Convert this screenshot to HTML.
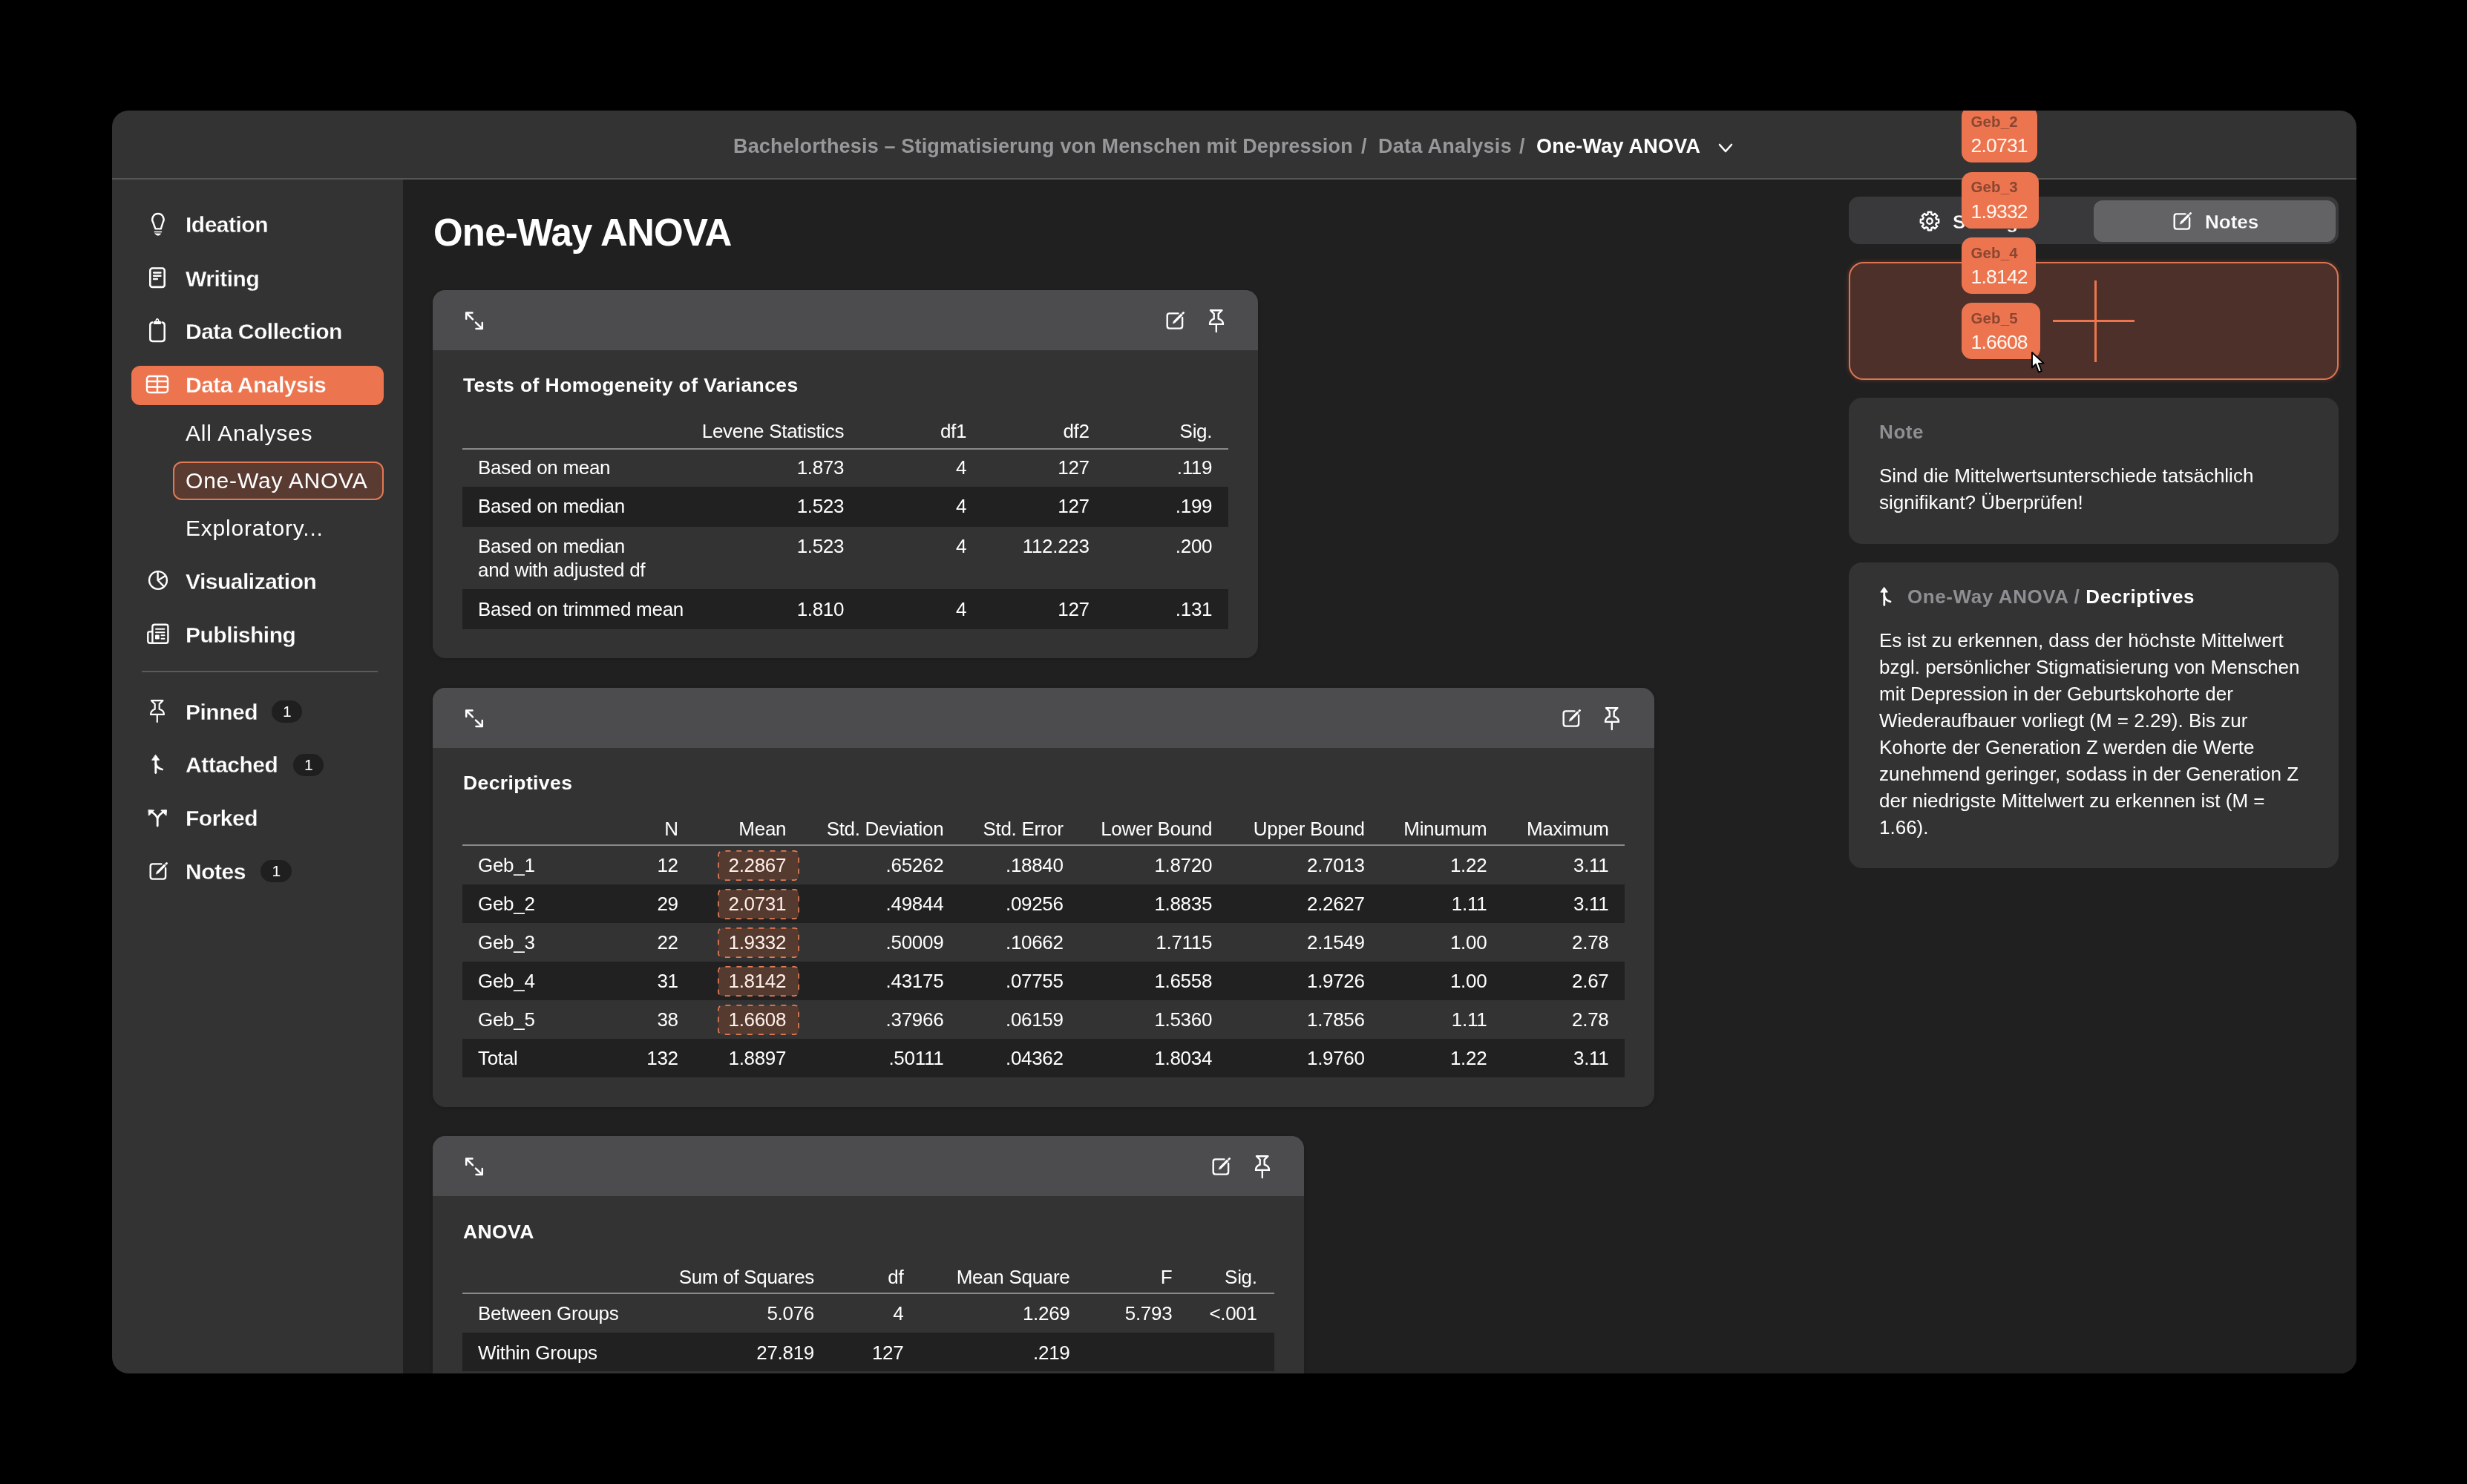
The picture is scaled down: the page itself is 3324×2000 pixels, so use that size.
<!DOCTYPE html><html><head><meta charset="utf-8"><title>One-Way ANOVA</title><style>
html,body{margin:0;padding:0;background:#000;width:3324px;height:2000px;overflow:hidden;}
body{position:relative;font-family:"Liberation Sans", sans-serif;}
.t{position:absolute;white-space:nowrap;}
</style></head><body><div id="root" style="position:absolute;left:0;top:0;width:3324px;height:2000px;will-change:transform;">
<div style="position:absolute;left:151px;top:149px;width:3024px;height:1702px;border-radius:22px;overflow:hidden;background:#333333;">
<div style="position:absolute;left:392px;top:93px;width:2632px;height:1609px;background:#202020;"></div>
<div style="position:absolute;left:0;top:91px;width:3024px;height:2px;background:#555;"></div>
</div>
<div class="t" style="left:988px;top:179.64px;font-size:27px;line-height:34px;font-weight:700;letter-spacing:0.16px;color:#98989b;">Bachelorthesis – Stigmatisierung von Menschen mit Depression</div>
<div class="t" style="left:1834px;top:179.64px;font-size:27px;line-height:34px;font-weight:700;color:#98989b;">/</div>
<div class="t" style="left:1857px;top:179.64px;font-size:27px;line-height:34px;font-weight:700;letter-spacing:0.3px;color:#98989b;">Data Analysis</div>
<div class="t" style="left:2047px;top:179.64px;font-size:27px;line-height:34px;font-weight:700;color:#98989b;">/</div>
<div class="t" style="left:2070px;top:179.64px;font-size:27px;line-height:34px;font-weight:700;letter-spacing:0.25px;color:#fff;">One-Way ANOVA</div>
<svg style="position:absolute;left:2313px;top:189px;" width="24" height="20" viewBox="0 0 24 20" fill="none" stroke="#fff" stroke-width="2.6" stroke-linecap="round" stroke-linejoin="round"><path d="M4 6 L12 15 L20 6"/></svg>
<div class="t" style="left:250px;top:284.11px;font-size:30px;line-height:38px;font-weight:700;-webkit-text-stroke:0.3px #333333;letter-spacing:-0.5px;color:#fff;">Ideation</div>
<div class="t" style="left:250px;top:356.61px;font-size:30px;line-height:38px;font-weight:700;-webkit-text-stroke:0.3px #333333;letter-spacing:-0.5px;color:#fff;">Writing</div>
<div class="t" style="left:250px;top:427.61px;font-size:30px;line-height:38px;font-weight:700;-webkit-text-stroke:0.3px #333333;letter-spacing:-0.5px;color:#fff;">Data Collection</div>
<div style="position:absolute;left:177px;top:493px;width:340px;height:53px;background:#ec7550;border-radius:12px;"></div>
<div class="t" style="left:250px;top:499.61px;font-size:30px;line-height:38px;font-weight:700;-webkit-text-stroke:0.3px #ec7550;letter-spacing:-0.5px;color:#fff;">Data Analysis</div>
<div class="t" style="left:250px;top:564.61px;font-size:30px;line-height:38px;letter-spacing:0.8px;color:#fff;">All Analyses</div>
<div style="position:absolute;left:233px;top:621.5px;width:284px;height:52.0px;background:#593b32;border:2px solid #e27954;border-radius:12px;box-sizing:border-box;"></div>
<div class="t" style="left:250px;top:628.61px;font-size:30px;line-height:38px;letter-spacing:0.8px;color:#fff;">One-Way ANOVA</div>
<div class="t" style="left:250px;top:692.61px;font-size:30px;line-height:38px;letter-spacing:0.8px;color:#fff;">Exploratory...</div>
<div class="t" style="left:250px;top:764.61px;font-size:30px;line-height:38px;font-weight:700;-webkit-text-stroke:0.3px #333333;letter-spacing:-0.5px;color:#fff;">Visualization</div>
<div class="t" style="left:250px;top:836.61px;font-size:30px;line-height:38px;font-weight:700;-webkit-text-stroke:0.3px #333333;letter-spacing:-0.5px;color:#fff;">Publishing</div>
<div style="position:absolute;left:191px;top:904px;width:318px;height:2px;background:#5a5a5a;"></div>
<div class="t" style="left:250px;top:940.61px;font-size:30px;line-height:38px;font-weight:700;-webkit-text-stroke:0.3px #333333;letter-spacing:-0.5px;color:#fff;">Pinned</div>
<div class="t" style="left:250px;top:1012.11px;font-size:30px;line-height:38px;font-weight:700;-webkit-text-stroke:0.3px #333333;letter-spacing:-0.5px;color:#fff;">Attached</div>
<div class="t" style="left:250px;top:1083.61px;font-size:30px;line-height:38px;font-weight:700;-webkit-text-stroke:0.3px #333333;letter-spacing:-0.5px;color:#fff;">Forked</div>
<div class="t" style="left:250px;top:1155.61px;font-size:30px;line-height:38px;font-weight:700;-webkit-text-stroke:0.3px #333333;letter-spacing:-0.5px;color:#fff;">Notes</div>
<div style="position:absolute;left:366px;top:944px;width:41px;height:30px;background:#1f1f1f;border-radius:15px;"></div>
<div class="t" style="left:381.0px;top:946.22px;font-size:21px;line-height:26px;color:#fff;">1</div>
<div style="position:absolute;left:395px;top:1015.5px;width:41px;height:30.0px;background:#1f1f1f;border-radius:15px;"></div>
<div class="t" style="left:410.0px;top:1017.72px;font-size:21px;line-height:26px;color:#fff;">1</div>
<div style="position:absolute;left:351px;top:1159px;width:42px;height:30px;background:#1f1f1f;border-radius:15px;"></div>
<div class="t" style="left:366.5px;top:1161.22px;font-size:21px;line-height:26px;color:#fff;">1</div>
<svg style="position:absolute;left:200px;top:284px;" width="26" height="36" viewBox="0 0 26 36" fill="none" stroke="#fff" stroke-width="2.4" stroke-linecap="round" stroke-linejoin="round"><path d="M9.4 24.4 L6.2 15.5 A7.7 7.7 0 1 1 19.6 15.5 L16.8 24.4 Z"/><path d="M8.4 28.5 H17.4" stroke-width="1.7"/><path d="M9.2 30.9 H16.6 Q15.5 33.2 12.9 33.2 Q10.3 33.2 9.2 30.9 Z" fill="#fff" stroke-width="0.8"/></svg>
<svg style="position:absolute;left:199px;top:358px;" width="26" height="32" viewBox="0 0 26 32" fill="none" stroke="#fff" stroke-width="2.6" stroke-linecap="round" stroke-linejoin="round"><rect x="3.3" y="3.5" width="19.4" height="25.4" rx="3"/><path d="M8.2 9.5 H17.4 M8.2 13.8 H17.4 M8.2 18 H12.8"/></svg>
<svg style="position:absolute;left:199px;top:427px;" width="26" height="36" viewBox="0 0 26 36" fill="none" stroke="#fff" stroke-width="2.5" stroke-linecap="round" stroke-linejoin="round"><path d="M6.4 7.5 Q3.3 7.7 3.3 11.5 V29.6 Q3.3 33 6.8 33 H19.2 Q22.7 33 22.7 29.6 V11.5 Q22.7 7.7 19.6 7.5"/><path d="M8.1 9.9 V6.8 Q8.1 5.8 9.1 5.8 H10.3 Q10.6 2 12.9 2 Q15.2 2 15.5 5.8 H16.9 Q17.9 5.8 17.9 6.8 V9.9 Z" fill="#fff" stroke="none"/><circle cx="12.9" cy="4.9" r="1.05" fill="#333" stroke="none"/></svg>
<svg style="position:absolute;left:195px;top:504px;" width="34" height="28" viewBox="0 0 34 28" fill="none" stroke="#fff" stroke-width="2.4" stroke-linecap="round" stroke-linejoin="round"><rect x="3" y="3" width="28" height="22" rx="3.8"/><path d="M3 10 H31 M3 17.5 H31 M17 3 V25"/></svg>
<svg style="position:absolute;left:196.5px;top:766.3px;" width="32" height="32" viewBox="0 0 32 32" fill="none" stroke="#fff" stroke-width="2.4" stroke-linecap="round" stroke-linejoin="round"><circle cx="16" cy="16" r="11.9"/><path d="M15.6 4.1 V16 L23.6 24.2 M16 16 L25.9 10"/></svg>
<svg style="position:absolute;left:196px;top:838px;" width="34" height="32" viewBox="0 0 34 32" fill="none" stroke="#fff" stroke-width="2.4" stroke-linecap="round" stroke-linejoin="round"><path d="M9.4 28.8 H27.4 Q30.4 28.8 30.4 25.8 V6.7 Q30.4 3.7 27.4 3.7 H12.4 Q9.4 3.7 9.4 6.7 V28.8 Z M9.4 28.8 H6.3 Q3.3 28.8 3.3 25.8 V15.4 Q3.3 13.4 5.3 13.4 H9.4"/><path d="M14 9.8 H25.5 M14 14.2 H25.5 M21.5 18.3 H25.5 M21.5 22.7 H25.5" stroke-width="1.9"/><rect x="13" y="17.5" width="5.7" height="6" rx="1.2" fill="#fff" stroke="none"/></svg>
<svg style="position:absolute;left:201px;top:942px;" width="24" height="34" viewBox="0 0 24 34" fill="none" stroke="#fff" stroke-width="2.2" stroke-linecap="round" stroke-linejoin="round"><path d="M3 2.2 H18.4 L13.7 6.9 V13.7 C17.5 14.8 20 17.5 20 20.9 H2 C2 17.5 4.5 14.8 7.7 13.7 V6.9 Z"/><path d="M10.8 21 V31"/></svg>
<svg style="position:absolute;left:201px;top:1014px;" width="24" height="32" viewBox="0 0 24 32" fill="none" stroke="#fff" stroke-width="2.8" stroke-linecap="round" stroke-linejoin="round"><path d="M8.8 27.6 V9.5"/><path d="M8.8 3.6 L13.6 10.3 H4 Z" fill="#fff" stroke-width="1"/><path d="M8.8 15 Q9.8 21 17.6 23"/></svg>
<svg style="position:absolute;left:197px;top:1088px;" width="30" height="28" viewBox="0 0 30 28" fill="none" stroke="#fff" stroke-width="2.8" stroke-linecap="round" stroke-linejoin="round"><path d="M15.2 25 V16 Q15.2 12 8.5 7 M15.2 16 Q15.2 12 21.9 7"/><path d="M3.3 3.7 L10.6 4 L3.7 10.9 Z M27.1 3.7 L19.8 4 L26.7 10.9 Z" fill="#fff" stroke-width="1"/></svg>
<svg style="position:absolute;left:198px;top:1158px;" width="32" height="32" viewBox="0 0 32 32" fill="none" stroke="#fff" stroke-width="2.4" stroke-linecap="round" stroke-linejoin="round"><path d="M19.5 6.4 H7.7 Q4.7 6.4 4.7 9.4 V23.6 Q4.7 26.6 7.7 26.6 H22.1 Q25.1 26.6 25.1 23.6 V12"/><path d="M12.3 19.8 L13.4 16.7 L23.3 6.8 L25.3 8.8 L15.4 18.7 Z" fill="#fff" stroke-width="0.6"/><path d="M25.7 6.3 L26.6 5.4" stroke-width="2.8"/></svg>
<div class="t" style="left:584px;top:282.33px;font-size:51px;line-height:64px;font-weight:700;letter-spacing:-0.8px;color:#fff;">One-Way ANOVA</div>
<div style="position:absolute;left:583px;top:391px;width:1112px;height:496px;background:#333333;border-radius:17px;overflow:hidden;box-shadow:0 1px 5px rgba(0,0,0,0.18);"><div style="position:absolute;left:0;top:0;right:0;height:81px;background:#4c4c4e;"></div></div>
<svg style="position:absolute;left:623px;top:416px;" width="32" height="32" viewBox="0 0 32 32" fill="none" stroke="#fff" stroke-width="2.5" stroke-linecap="round" stroke-linejoin="round"><path d="M5.2 13.8 V5.5 H13.5 M5.2 5.5 L14 14.3"/><path d="M26.8 19 V27.1 H18.5 M26.8 27.1 L18 18.7"/></svg>
<svg style="position:absolute;left:1568px;top:416px;" width="32" height="32" viewBox="0 0 32 32" fill="none" stroke="#fff" stroke-width="2.4" stroke-linecap="round" stroke-linejoin="round"><path d="M19.5 6.4 H7.7 Q4.7 6.4 4.7 9.4 V23.6 Q4.7 26.6 7.7 26.6 H22.1 Q25.1 26.6 25.1 23.6 V12"/><path d="M12.3 19.8 L13.4 16.7 L23.3 6.8 L25.3 8.8 L15.4 18.7 Z" fill="#fff" stroke-width="0.6"/><path d="M25.7 6.3 L26.6 5.4" stroke-width="2.8"/></svg>
<svg style="position:absolute;left:1628px;top:416px;" width="24" height="34" viewBox="0 0 24 34" fill="none" stroke="#fff" stroke-width="2.4" stroke-linecap="round" stroke-linejoin="round"><path d="M3 2.2 H18.4 L13.7 6.9 V13.7 C17.5 14.8 20 17.5 20 20.9 H2 C2 17.5 4.5 14.8 7.7 13.7 V6.9 Z"/><path d="M10.8 21 V31"/></svg>
<div class="t" style="left:624px;top:503.32px;font-size:26.5px;line-height:33px;font-weight:700;letter-spacing:0.4px;color:#fff;">Tests of Homogeneity of Variances</div>
<div class="t" style="right:2186.80px;text-align:right;top:565.49px;font-size:26px;line-height:32px;letter-spacing:-0.3px;color:#fff;">Levene Statistics</div>
<div class="t" style="right:2021.80px;text-align:right;top:565.49px;font-size:26px;line-height:32px;letter-spacing:-0.3px;color:#fff;">df1</div>
<div class="t" style="right:1856.30px;text-align:right;top:565.49px;font-size:26px;line-height:32px;letter-spacing:-0.3px;color:#fff;">df2</div>
<div class="t" style="right:1690.80px;text-align:right;top:565.49px;font-size:26px;line-height:32px;letter-spacing:-0.3px;color:#fff;">Sig.</div>
<div style="position:absolute;left:623px;top:604px;width:1032px;height:2px;background:#8a8a8a;"></div>
<div style="position:absolute;left:623px;top:656px;width:1032px;height:53.5px;background:#212121;"></div>
<div style="position:absolute;left:623px;top:793.5px;width:1032px;height:54.0px;background:#212121;"></div>
<div class="t" style="left:644px;top:614.49px;font-size:26px;line-height:32px;letter-spacing:-0.3px;color:#fff;">Based on mean</div>
<div class="t" style="right:2186.80px;text-align:right;top:614.49px;font-size:26px;line-height:32px;letter-spacing:-0.3px;color:#fff;">1.873</div>
<div class="t" style="right:2021.80px;text-align:right;top:614.49px;font-size:26px;line-height:32px;letter-spacing:-0.3px;color:#fff;">4</div>
<div class="t" style="right:1856.30px;text-align:right;top:614.49px;font-size:26px;line-height:32px;letter-spacing:-0.3px;color:#fff;">127</div>
<div class="t" style="right:1690.80px;text-align:right;top:614.49px;font-size:26px;line-height:32px;letter-spacing:-0.3px;color:#fff;">.119</div>
<div class="t" style="left:644px;top:665.99px;font-size:26px;line-height:32px;letter-spacing:-0.3px;color:#fff;">Based on median</div>
<div class="t" style="right:2186.80px;text-align:right;top:665.99px;font-size:26px;line-height:32px;letter-spacing:-0.3px;color:#fff;">1.523</div>
<div class="t" style="right:2021.80px;text-align:right;top:665.99px;font-size:26px;line-height:32px;letter-spacing:-0.3px;color:#fff;">4</div>
<div class="t" style="right:1856.30px;text-align:right;top:665.99px;font-size:26px;line-height:32px;letter-spacing:-0.3px;color:#fff;">127</div>
<div class="t" style="right:1690.80px;text-align:right;top:665.99px;font-size:26px;line-height:32px;letter-spacing:-0.3px;color:#fff;">.199</div>
<div class="t" style="left:644px;top:720.49px;font-size:26px;line-height:32px;letter-spacing:-0.3px;color:#fff;">Based on median</div>
<div class="t" style="right:2186.80px;text-align:right;top:720.49px;font-size:26px;line-height:32px;letter-spacing:-0.3px;color:#fff;">1.523</div>
<div class="t" style="right:2021.80px;text-align:right;top:720.49px;font-size:26px;line-height:32px;letter-spacing:-0.3px;color:#fff;">4</div>
<div class="t" style="right:1856.30px;text-align:right;top:720.49px;font-size:26px;line-height:32px;letter-spacing:-0.3px;color:#fff;">112.223</div>
<div class="t" style="right:1690.80px;text-align:right;top:720.49px;font-size:26px;line-height:32px;letter-spacing:-0.3px;color:#fff;">.200</div>
<div class="t" style="left:644px;top:804.69px;font-size:26px;line-height:32px;letter-spacing:-0.3px;color:#fff;">Based on trimmed mean</div>
<div class="t" style="right:2186.80px;text-align:right;top:804.69px;font-size:26px;line-height:32px;letter-spacing:-0.3px;color:#fff;">1.810</div>
<div class="t" style="right:2021.80px;text-align:right;top:804.69px;font-size:26px;line-height:32px;letter-spacing:-0.3px;color:#fff;">4</div>
<div class="t" style="right:1856.30px;text-align:right;top:804.69px;font-size:26px;line-height:32px;letter-spacing:-0.3px;color:#fff;">127</div>
<div class="t" style="right:1690.80px;text-align:right;top:804.69px;font-size:26px;line-height:32px;letter-spacing:-0.3px;color:#fff;">.131</div>
<div class="t" style="left:644px;top:751.99px;font-size:26px;line-height:32px;letter-spacing:-0.3px;color:#fff;">and with adjusted df</div>
<div style="position:absolute;left:583px;top:927px;width:1646px;height:564.5px;background:#333333;border-radius:17px;overflow:hidden;box-shadow:0 1px 5px rgba(0,0,0,0.18);"><div style="position:absolute;left:0;top:0;right:0;height:81px;background:#4c4c4e;"></div></div>
<svg style="position:absolute;left:623px;top:952px;" width="32" height="32" viewBox="0 0 32 32" fill="none" stroke="#fff" stroke-width="2.5" stroke-linecap="round" stroke-linejoin="round"><path d="M5.2 13.8 V5.5 H13.5 M5.2 5.5 L14 14.3"/><path d="M26.8 19 V27.1 H18.5 M26.8 27.1 L18 18.7"/></svg>
<svg style="position:absolute;left:2101.5px;top:952px;" width="32" height="32" viewBox="0 0 32 32" fill="none" stroke="#fff" stroke-width="2.4" stroke-linecap="round" stroke-linejoin="round"><path d="M19.5 6.4 H7.7 Q4.7 6.4 4.7 9.4 V23.6 Q4.7 26.6 7.7 26.6 H22.1 Q25.1 26.6 25.1 23.6 V12"/><path d="M12.3 19.8 L13.4 16.7 L23.3 6.8 L25.3 8.8 L15.4 18.7 Z" fill="#fff" stroke-width="0.6"/><path d="M25.7 6.3 L26.6 5.4" stroke-width="2.8"/></svg>
<svg style="position:absolute;left:2161px;top:952px;" width="24" height="34" viewBox="0 0 24 34" fill="none" stroke="#fff" stroke-width="2.4" stroke-linecap="round" stroke-linejoin="round"><path d="M3 2.2 H18.4 L13.7 6.9 V13.7 C17.5 14.8 20 17.5 20 20.9 H2 C2 17.5 4.5 14.8 7.7 13.7 V6.9 Z"/><path d="M10.8 21 V31"/></svg>
<div class="t" style="left:624px;top:1039.32px;font-size:26.5px;line-height:33px;font-weight:700;letter-spacing:0.4px;color:#fff;">Decriptives</div>
<div class="t" style="right:2410.30px;text-align:right;top:1100.99px;font-size:26px;line-height:32px;letter-spacing:-0.3px;color:#fff;">N</div>
<div class="t" style="right:2264.80px;text-align:right;top:1100.99px;font-size:26px;line-height:32px;letter-spacing:-0.3px;color:#fff;">Mean</div>
<div class="t" style="right:2052.70px;text-align:right;top:1100.99px;font-size:26px;line-height:32px;letter-spacing:-0.3px;color:#fff;">Std. Deviation</div>
<div class="t" style="right:1891.30px;text-align:right;top:1100.99px;font-size:26px;line-height:32px;letter-spacing:-0.3px;color:#fff;">Std. Error</div>
<div class="t" style="right:1690.90px;text-align:right;top:1100.99px;font-size:26px;line-height:32px;letter-spacing:-0.3px;color:#fff;">Lower Bound</div>
<div class="t" style="right:1485.30px;text-align:right;top:1100.99px;font-size:26px;line-height:32px;letter-spacing:-0.3px;color:#fff;">Upper Bound</div>
<div class="t" style="right:1320.70px;text-align:right;top:1100.99px;font-size:26px;line-height:32px;letter-spacing:-0.3px;color:#fff;">Minumum</div>
<div class="t" style="right:1156.50px;text-align:right;top:1100.99px;font-size:26px;line-height:32px;letter-spacing:-0.3px;color:#fff;">Maximum</div>
<div style="position:absolute;left:623px;top:1138px;width:1566px;height:2px;background:#8a8a8a;"></div>
<svg style="position:absolute;left:967px;top:1145.5px" width="110" height="41" viewBox="0 0 110 41"><rect x="0.9" y="0.9" width="108.2" height="39.2" rx="5.5" fill="#553a30" stroke="#e57c56" stroke-width="1.7" stroke-dasharray="7 8" stroke-dashoffset="-4"/></svg>
<div class="t" style="left:644px;top:1150.49px;font-size:26px;line-height:32px;letter-spacing:-0.3px;color:#fff;">Geb_1</div>
<div class="t" style="right:2410.30px;text-align:right;top:1150.49px;font-size:26px;line-height:32px;letter-spacing:-0.3px;color:#fff;">12</div>
<div class="t" style="right:2264.80px;text-align:right;top:1150.49px;font-size:26px;line-height:32px;letter-spacing:-0.3px;color:#fff0ea;">2.2867</div>
<div class="t" style="right:2052.70px;text-align:right;top:1150.49px;font-size:26px;line-height:32px;letter-spacing:-0.3px;color:#fff;">.65262</div>
<div class="t" style="right:1891.30px;text-align:right;top:1150.49px;font-size:26px;line-height:32px;letter-spacing:-0.3px;color:#fff;">.18840</div>
<div class="t" style="right:1690.90px;text-align:right;top:1150.49px;font-size:26px;line-height:32px;letter-spacing:-0.3px;color:#fff;">1.8720</div>
<div class="t" style="right:1485.30px;text-align:right;top:1150.49px;font-size:26px;line-height:32px;letter-spacing:-0.3px;color:#fff;">2.7013</div>
<div class="t" style="right:1320.70px;text-align:right;top:1150.49px;font-size:26px;line-height:32px;letter-spacing:-0.3px;color:#fff;">1.22</div>
<div class="t" style="right:1156.50px;text-align:right;top:1150.49px;font-size:26px;line-height:32px;letter-spacing:-0.3px;color:#fff;">3.11</div>
<div style="position:absolute;left:623px;top:1192px;width:1566px;height:52px;background:#212121;"></div>
<svg style="position:absolute;left:967px;top:1197.5px" width="110" height="41" viewBox="0 0 110 41"><rect x="0.9" y="0.9" width="108.2" height="39.2" rx="5.5" fill="#553a30" stroke="#e57c56" stroke-width="1.7" stroke-dasharray="7 8" stroke-dashoffset="-4"/></svg>
<div class="t" style="left:644px;top:1202.49px;font-size:26px;line-height:32px;letter-spacing:-0.3px;color:#fff;">Geb_2</div>
<div class="t" style="right:2410.30px;text-align:right;top:1202.49px;font-size:26px;line-height:32px;letter-spacing:-0.3px;color:#fff;">29</div>
<div class="t" style="right:2264.80px;text-align:right;top:1202.49px;font-size:26px;line-height:32px;letter-spacing:-0.3px;color:#fff0ea;">2.0731</div>
<div class="t" style="right:2052.70px;text-align:right;top:1202.49px;font-size:26px;line-height:32px;letter-spacing:-0.3px;color:#fff;">.49844</div>
<div class="t" style="right:1891.30px;text-align:right;top:1202.49px;font-size:26px;line-height:32px;letter-spacing:-0.3px;color:#fff;">.09256</div>
<div class="t" style="right:1690.90px;text-align:right;top:1202.49px;font-size:26px;line-height:32px;letter-spacing:-0.3px;color:#fff;">1.8835</div>
<div class="t" style="right:1485.30px;text-align:right;top:1202.49px;font-size:26px;line-height:32px;letter-spacing:-0.3px;color:#fff;">2.2627</div>
<div class="t" style="right:1320.70px;text-align:right;top:1202.49px;font-size:26px;line-height:32px;letter-spacing:-0.3px;color:#fff;">1.11</div>
<div class="t" style="right:1156.50px;text-align:right;top:1202.49px;font-size:26px;line-height:32px;letter-spacing:-0.3px;color:#fff;">3.11</div>
<svg style="position:absolute;left:967px;top:1249.5px" width="110" height="41" viewBox="0 0 110 41"><rect x="0.9" y="0.9" width="108.2" height="39.2" rx="5.5" fill="#553a30" stroke="#e57c56" stroke-width="1.7" stroke-dasharray="7 8" stroke-dashoffset="-4"/></svg>
<div class="t" style="left:644px;top:1254.49px;font-size:26px;line-height:32px;letter-spacing:-0.3px;color:#fff;">Geb_3</div>
<div class="t" style="right:2410.30px;text-align:right;top:1254.49px;font-size:26px;line-height:32px;letter-spacing:-0.3px;color:#fff;">22</div>
<div class="t" style="right:2264.80px;text-align:right;top:1254.49px;font-size:26px;line-height:32px;letter-spacing:-0.3px;color:#fff0ea;">1.9332</div>
<div class="t" style="right:2052.70px;text-align:right;top:1254.49px;font-size:26px;line-height:32px;letter-spacing:-0.3px;color:#fff;">.50009</div>
<div class="t" style="right:1891.30px;text-align:right;top:1254.49px;font-size:26px;line-height:32px;letter-spacing:-0.3px;color:#fff;">.10662</div>
<div class="t" style="right:1690.90px;text-align:right;top:1254.49px;font-size:26px;line-height:32px;letter-spacing:-0.3px;color:#fff;">1.7115</div>
<div class="t" style="right:1485.30px;text-align:right;top:1254.49px;font-size:26px;line-height:32px;letter-spacing:-0.3px;color:#fff;">2.1549</div>
<div class="t" style="right:1320.70px;text-align:right;top:1254.49px;font-size:26px;line-height:32px;letter-spacing:-0.3px;color:#fff;">1.00</div>
<div class="t" style="right:1156.50px;text-align:right;top:1254.49px;font-size:26px;line-height:32px;letter-spacing:-0.3px;color:#fff;">2.78</div>
<div style="position:absolute;left:623px;top:1296px;width:1566px;height:52px;background:#212121;"></div>
<svg style="position:absolute;left:967px;top:1301.5px" width="110" height="41" viewBox="0 0 110 41"><rect x="0.9" y="0.9" width="108.2" height="39.2" rx="5.5" fill="#553a30" stroke="#e57c56" stroke-width="1.7" stroke-dasharray="7 8" stroke-dashoffset="-4"/></svg>
<div class="t" style="left:644px;top:1306.49px;font-size:26px;line-height:32px;letter-spacing:-0.3px;color:#fff;">Geb_4</div>
<div class="t" style="right:2410.30px;text-align:right;top:1306.49px;font-size:26px;line-height:32px;letter-spacing:-0.3px;color:#fff;">31</div>
<div class="t" style="right:2264.80px;text-align:right;top:1306.49px;font-size:26px;line-height:32px;letter-spacing:-0.3px;color:#fff0ea;">1.8142</div>
<div class="t" style="right:2052.70px;text-align:right;top:1306.49px;font-size:26px;line-height:32px;letter-spacing:-0.3px;color:#fff;">.43175</div>
<div class="t" style="right:1891.30px;text-align:right;top:1306.49px;font-size:26px;line-height:32px;letter-spacing:-0.3px;color:#fff;">.07755</div>
<div class="t" style="right:1690.90px;text-align:right;top:1306.49px;font-size:26px;line-height:32px;letter-spacing:-0.3px;color:#fff;">1.6558</div>
<div class="t" style="right:1485.30px;text-align:right;top:1306.49px;font-size:26px;line-height:32px;letter-spacing:-0.3px;color:#fff;">1.9726</div>
<div class="t" style="right:1320.70px;text-align:right;top:1306.49px;font-size:26px;line-height:32px;letter-spacing:-0.3px;color:#fff;">1.00</div>
<div class="t" style="right:1156.50px;text-align:right;top:1306.49px;font-size:26px;line-height:32px;letter-spacing:-0.3px;color:#fff;">2.67</div>
<svg style="position:absolute;left:967px;top:1353.5px" width="110" height="41" viewBox="0 0 110 41"><rect x="0.9" y="0.9" width="108.2" height="39.2" rx="5.5" fill="#553a30" stroke="#e57c56" stroke-width="1.7" stroke-dasharray="7 8" stroke-dashoffset="-4"/></svg>
<div class="t" style="left:644px;top:1358.49px;font-size:26px;line-height:32px;letter-spacing:-0.3px;color:#fff;">Geb_5</div>
<div class="t" style="right:2410.30px;text-align:right;top:1358.49px;font-size:26px;line-height:32px;letter-spacing:-0.3px;color:#fff;">38</div>
<div class="t" style="right:2264.80px;text-align:right;top:1358.49px;font-size:26px;line-height:32px;letter-spacing:-0.3px;color:#fff0ea;">1.6608</div>
<div class="t" style="right:2052.70px;text-align:right;top:1358.49px;font-size:26px;line-height:32px;letter-spacing:-0.3px;color:#fff;">.37966</div>
<div class="t" style="right:1891.30px;text-align:right;top:1358.49px;font-size:26px;line-height:32px;letter-spacing:-0.3px;color:#fff;">.06159</div>
<div class="t" style="right:1690.90px;text-align:right;top:1358.49px;font-size:26px;line-height:32px;letter-spacing:-0.3px;color:#fff;">1.5360</div>
<div class="t" style="right:1485.30px;text-align:right;top:1358.49px;font-size:26px;line-height:32px;letter-spacing:-0.3px;color:#fff;">1.7856</div>
<div class="t" style="right:1320.70px;text-align:right;top:1358.49px;font-size:26px;line-height:32px;letter-spacing:-0.3px;color:#fff;">1.11</div>
<div class="t" style="right:1156.50px;text-align:right;top:1358.49px;font-size:26px;line-height:32px;letter-spacing:-0.3px;color:#fff;">2.78</div>
<div style="position:absolute;left:623px;top:1400px;width:1566px;height:52px;background:#212121;"></div>
<div class="t" style="left:644px;top:1410.49px;font-size:26px;line-height:32px;letter-spacing:-0.3px;color:#fff;">Total</div>
<div class="t" style="right:2410.30px;text-align:right;top:1410.49px;font-size:26px;line-height:32px;letter-spacing:-0.3px;color:#fff;">132</div>
<div class="t" style="right:2264.80px;text-align:right;top:1410.49px;font-size:26px;line-height:32px;letter-spacing:-0.3px;color:#fff;">1.8897</div>
<div class="t" style="right:2052.70px;text-align:right;top:1410.49px;font-size:26px;line-height:32px;letter-spacing:-0.3px;color:#fff;">.50111</div>
<div class="t" style="right:1891.30px;text-align:right;top:1410.49px;font-size:26px;line-height:32px;letter-spacing:-0.3px;color:#fff;">.04362</div>
<div class="t" style="right:1690.90px;text-align:right;top:1410.49px;font-size:26px;line-height:32px;letter-spacing:-0.3px;color:#fff;">1.8034</div>
<div class="t" style="right:1485.30px;text-align:right;top:1410.49px;font-size:26px;line-height:32px;letter-spacing:-0.3px;color:#fff;">1.9760</div>
<div class="t" style="right:1320.70px;text-align:right;top:1410.49px;font-size:26px;line-height:32px;letter-spacing:-0.3px;color:#fff;">1.22</div>
<div class="t" style="right:1156.50px;text-align:right;top:1410.49px;font-size:26px;line-height:32px;letter-spacing:-0.3px;color:#fff;">3.11</div>
<div style="position:absolute;left:583px;top:1531px;width:1174px;height:320px;background:#333333;border-radius:17px 17px 0 0;overflow:hidden;box-shadow:0 1px 5px rgba(0,0,0,0.18);"><div style="position:absolute;left:0;top:0;right:0;height:81px;background:#4c4c4e;"></div></div>
<svg style="position:absolute;left:623px;top:1556px;" width="32" height="32" viewBox="0 0 32 32" fill="none" stroke="#fff" stroke-width="2.5" stroke-linecap="round" stroke-linejoin="round"><path d="M5.2 13.8 V5.5 H13.5 M5.2 5.5 L14 14.3"/><path d="M26.8 19 V27.1 H18.5 M26.8 27.1 L18 18.7"/></svg>
<svg style="position:absolute;left:1630px;top:1556px;" width="32" height="32" viewBox="0 0 32 32" fill="none" stroke="#fff" stroke-width="2.4" stroke-linecap="round" stroke-linejoin="round"><path d="M19.5 6.4 H7.7 Q4.7 6.4 4.7 9.4 V23.6 Q4.7 26.6 7.7 26.6 H22.1 Q25.1 26.6 25.1 23.6 V12"/><path d="M12.3 19.8 L13.4 16.7 L23.3 6.8 L25.3 8.8 L15.4 18.7 Z" fill="#fff" stroke-width="0.6"/><path d="M25.7 6.3 L26.6 5.4" stroke-width="2.8"/></svg>
<svg style="position:absolute;left:1690px;top:1556px;" width="24" height="34" viewBox="0 0 24 34" fill="none" stroke="#fff" stroke-width="2.4" stroke-linecap="round" stroke-linejoin="round"><path d="M3 2.2 H18.4 L13.7 6.9 V13.7 C17.5 14.8 20 17.5 20 20.9 H2 C2 17.5 4.5 14.8 7.7 13.7 V6.9 Z"/><path d="M10.8 21 V31"/></svg>
<div class="t" style="left:624px;top:1643.82px;font-size:26.5px;line-height:33px;font-weight:700;letter-spacing:0.4px;color:#fff;">ANOVA</div>
<div class="t" style="right:2227.00px;text-align:right;top:1704.99px;font-size:26px;line-height:32px;letter-spacing:-0.3px;color:#fff;">Sum of Squares</div>
<div class="t" style="right:2106.60px;text-align:right;top:1704.99px;font-size:26px;line-height:32px;letter-spacing:-0.3px;color:#fff;">df</div>
<div class="t" style="right:1882.50px;text-align:right;top:1704.99px;font-size:26px;line-height:32px;letter-spacing:-0.3px;color:#fff;">Mean Square</div>
<div class="t" style="right:1744.70px;text-align:right;top:1704.99px;font-size:26px;line-height:32px;letter-spacing:-0.3px;color:#fff;">F</div>
<div class="t" style="right:1630.30px;text-align:right;top:1704.99px;font-size:26px;line-height:32px;letter-spacing:-0.3px;color:#fff;">Sig.</div>
<div style="position:absolute;left:623px;top:1742px;width:1094px;height:2px;background:#8a8a8a;"></div>
<div style="position:absolute;left:623px;top:1796px;width:1094px;height:52px;background:#212121;"></div>
<div class="t" style="left:644px;top:1754.49px;font-size:26px;line-height:32px;letter-spacing:-0.3px;color:#fff;">Between Groups</div>
<div class="t" style="right:2227.00px;text-align:right;top:1754.49px;font-size:26px;line-height:32px;letter-spacing:-0.3px;color:#fff;">5.076</div>
<div class="t" style="right:2106.60px;text-align:right;top:1754.49px;font-size:26px;line-height:32px;letter-spacing:-0.3px;color:#fff;">4</div>
<div class="t" style="right:1882.50px;text-align:right;top:1754.49px;font-size:26px;line-height:32px;letter-spacing:-0.3px;color:#fff;">1.269</div>
<div class="t" style="right:1744.70px;text-align:right;top:1754.49px;font-size:26px;line-height:32px;letter-spacing:-0.3px;color:#fff;">5.793</div>
<div class="t" style="right:1630.30px;text-align:right;top:1754.49px;font-size:26px;line-height:32px;letter-spacing:-0.3px;color:#fff;">&lt;.001</div>
<div class="t" style="left:644px;top:1806.99px;font-size:26px;line-height:32px;letter-spacing:-0.3px;color:#fff;">Within Groups</div>
<div class="t" style="right:2227.00px;text-align:right;top:1806.99px;font-size:26px;line-height:32px;letter-spacing:-0.3px;color:#fff;">27.819</div>
<div class="t" style="right:2106.60px;text-align:right;top:1806.99px;font-size:26px;line-height:32px;letter-spacing:-0.3px;color:#fff;">127</div>
<div class="t" style="right:1882.50px;text-align:right;top:1806.99px;font-size:26px;line-height:32px;letter-spacing:-0.3px;color:#fff;">.219</div>
<div style="position:absolute;left:2491px;top:265px;width:660px;height:64px;background:#39393c;border-radius:14px;"></div>
<div style="position:absolute;left:2821px;top:269.5px;width:326px;height:56.0px;background:#636366;border-radius:12px;"></div>
<svg style="position:absolute;left:2584.4px;top:282.1px;" width="32" height="32" viewBox="0 0 32 32" fill="none" stroke="#fff" stroke-width="2.4" stroke-linecap="round" stroke-linejoin="round"><path d="M13.54 6.82 L13.74 3.81 L18.26 3.81 L18.46 6.82 L20.75 7.77 L23.02 5.78 L26.22 8.98 L24.23 11.25 L25.18 13.54 L28.19 13.74 L28.19 18.26 L25.18 18.46 L24.23 20.75 L26.22 23.02 L23.02 26.22 L20.75 24.23 L18.46 25.18 L18.26 28.19 L13.74 28.19 L13.54 25.18 L11.25 24.23 L8.98 26.22 L5.78 23.02 L7.77 20.75 L6.82 18.46 L3.81 18.26 L3.81 13.74 L6.82 13.54 L7.77 11.25 L5.78 8.98 L8.98 5.78 L11.25 7.77 Z"/><circle cx="16" cy="16" r="3.7"/></svg>
<div class="t" style="left:2631px;top:282.99px;font-size:26px;line-height:32px;font-weight:700;-webkit-text-stroke:0.3px #39393c;color:#fff;">Settings</div>
<svg style="position:absolute;left:2925px;top:282px;" width="32" height="32" viewBox="0 0 32 32" fill="none" stroke="#fff" stroke-width="2.4" stroke-linecap="round" stroke-linejoin="round"><path d="M19.5 6.4 H7.7 Q4.7 6.4 4.7 9.4 V23.6 Q4.7 26.6 7.7 26.6 H22.1 Q25.1 26.6 25.1 23.6 V12"/><path d="M12.3 19.8 L13.4 16.7 L23.3 6.8 L25.3 8.8 L15.4 18.7 Z" fill="#fff" stroke-width="0.6"/><path d="M25.7 6.3 L26.6 5.4" stroke-width="2.8"/></svg>
<div class="t" style="left:2971px;top:282.99px;font-size:26px;line-height:32px;font-weight:700;-webkit-text-stroke:0.3px #636366;color:#fff;">Notes</div>
<div style="position:absolute;left:2491px;top:353px;width:660px;height:159px;background:#4c3029;border:2px solid #dc7451;border-radius:20px;box-sizing:border-box;box-shadow:0 0 6px rgba(236,117,80,0.3);"></div>
<div style="position:absolute;left:2822px;top:378px;width:3px;height:110px;background:#ec7550;"></div>
<div style="position:absolute;left:2766px;top:431px;width:110px;height:3px;background:#ec7550;"></div>
<div style="position:absolute;left:2491px;top:536px;width:660px;height:197px;background:#333333;border-radius:18px;"></div>
<div class="t" style="left:2532px;top:566.49px;font-size:26px;line-height:32px;font-weight:700;letter-spacing:0.6px;color:#8e8e93;">Note</div>
<div class="t" style="left:2532px;top:624.99px;font-size:26px;line-height:32px;color:#fff;">Sind die Mittelwertsunterschiede tatsächlich</div>
<div class="t" style="left:2532px;top:660.99px;font-size:26px;line-height:32px;color:#fff;">signifikant? Überprüfen!</div>
<div style="position:absolute;left:2491px;top:758px;width:660px;height:412px;background:#333333;border-radius:18px;"></div>
<svg style="position:absolute;left:2532px;top:788px;" width="24" height="32" viewBox="0 0 24 32" fill="none" stroke="#fff" stroke-width="2.8" stroke-linecap="round" stroke-linejoin="round"><path d="M6.8 27.4 V9.5"/><path d="M6.8 3.6 L11.4 10.1 H2.2 Z" fill="#fff" stroke-width="1"/><path d="M6.8 15 Q7.8 21 15 22.8"/></svg>
<div class="t" style="left:2570px;top:788.49px;font-size:26px;line-height:32px;font-weight:700;letter-spacing:0.6px;color:#8e8e93;">One-Way ANOVA / <span style="color:#fff">Decriptives</span></div>
<div class="t" style="left:2532px;top:847.49px;font-size:26px;line-height:32px;color:#fff;">Es ist zu erkennen, dass der höchste Mittelwert</div>
<div class="t" style="left:2532px;top:883.39px;font-size:26px;line-height:32px;color:#fff;">bzgl. persönlicher Stigmatisierung von Menschen</div>
<div class="t" style="left:2532px;top:919.29px;font-size:26px;line-height:32px;color:#fff;">mit Depression in der Geburtskohorte der</div>
<div class="t" style="left:2532px;top:955.19px;font-size:26px;line-height:32px;color:#fff;">Wiederaufbauer vorliegt (M = 2.29). Bis zur</div>
<div class="t" style="left:2532px;top:991.09px;font-size:26px;line-height:32px;color:#fff;">Kohorte der Generation Z werden die Werte</div>
<div class="t" style="left:2532px;top:1026.99px;font-size:26px;line-height:32px;color:#fff;">zunehmend geringer, sodass in der Generation Z</div>
<div class="t" style="left:2532px;top:1062.89px;font-size:26px;line-height:32px;color:#fff;">der niedrigste Mittelwert zu erkennen ist (M =</div>
<div class="t" style="left:2532px;top:1098.79px;font-size:26px;line-height:32px;color:#fff;">1.66).</div>
<div style="position:absolute;left:2600px;top:149px;width:200px;height:400px;overflow:hidden;">
<div style="position:absolute;left:43px;top:-6px;width:102px;height:76px;background:#ec7550;border-radius:14px;"></div>
<div style="position:absolute;left:43px;top:82.5px;width:104px;height:76px;background:#ec7550;border-radius:14px;"></div>
<div style="position:absolute;left:43px;top:171px;width:100px;height:76px;background:#ec7550;border-radius:14px;"></div>
<div style="position:absolute;left:43px;top:259px;width:106px;height:76px;background:#ec7550;border-radius:14px;"></div>
<div class="t" style="left:55.5px;top:1.80px;font-size:20.5px;line-height:26px;font-weight:700;letter-spacing:0.1px;color:#8a4630;">Geb_2</div>
<div class="t" style="left:55.5px;top:30.22px;font-size:26.5px;line-height:34px;letter-spacing:-0.8px;color:#fff8f2;">2.0731</div>
<div class="t" style="left:55.5px;top:90.30px;font-size:20.5px;line-height:26px;font-weight:700;letter-spacing:0.1px;color:#8a4630;">Geb_3</div>
<div class="t" style="left:55.5px;top:118.72px;font-size:26.5px;line-height:34px;letter-spacing:-0.8px;color:#fff8f2;">1.9332</div>
<div class="t" style="left:55.5px;top:178.80px;font-size:20.5px;line-height:26px;font-weight:700;letter-spacing:0.1px;color:#8a4630;">Geb_4</div>
<div class="t" style="left:55.5px;top:207.22px;font-size:26.5px;line-height:34px;letter-spacing:-0.8px;color:#fff8f2;">1.8142</div>
<div class="t" style="left:55.5px;top:266.80px;font-size:20.5px;line-height:26px;font-weight:700;letter-spacing:0.1px;color:#8a4630;">Geb_5</div>
<div class="t" style="left:55.5px;top:295.22px;font-size:26.5px;line-height:34px;letter-spacing:-0.8px;color:#fff8f2;">1.6608</div>
</div>
<svg style="position:absolute;left:2733px;top:470px;" width="26" height="36" viewBox="0 0 26 36"><path d="M5 5 L5 25.5 L10 20.8 L13.9 31.6 L17.7 30 L13.8 19.6 L20.6 19.6 Z" fill="#fff" stroke="#000" stroke-width="1.9" stroke-linejoin="round"/></svg>
</div></body></html>
